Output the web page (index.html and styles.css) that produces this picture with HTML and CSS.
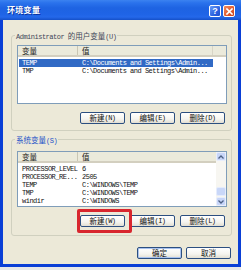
FILE: index.html
```html
<!DOCTYPE html>
<html lang="zh-CN">
<head>
<meta charset="utf-8">
<title>环境变量</title>
<link rel="stylesheet" href="styles.css">
</head>
<body>
<div class="window">
  <div class="titlebar">
    <span class="title">环境变量</span>
    <div class="tb-btns">
      <span class="tb help">?</span>
      <span class="tb close"><svg width="7" height="7" viewBox="0 0 7 7"><path d="M1 1L6 6M6 1L1 6" stroke="#fff" stroke-width="1.6" stroke-linecap="square"/></svg></span>
    </div>
  </div>
  <div class="client">
    <fieldset class="group group-user">
      <legend class="legend legend-dark"><span class="m">Administrator </span>的用户变量<span class="m">(U)</span></legend>
      <div class="list list-user">
        <div class="pane">
          <div class="header"><div class="hc c1">变量</div><div class="hc c2">值</div><div class="hc c3"></div></div>
          <div class="row sel"><span class="n m">TEMP</span><span class="v m">C:\Documents and Settings\Admin...</span></div>
          <div class="row"><span class="n m">TMP</span><span class="v m">C:\Documents and Settings\Admin...</span></div>
        </div>
      </div>
      <div class="btnrow">
        <button class="btn">新建<span class="m">(N)</span></button>
        <button class="btn">编辑<span class="m">(E)</span></button>
        <button class="btn">删除<span class="m">(D)</span></button>
      </div>
    </fieldset>
    <fieldset class="group group-sys">
      <legend class="legend legend-blue">系统变量<span class="m">(S)</span></legend>
      <div class="list list-sys">
        <div class="pane">
          <div class="header"><div class="hc c1">变量</div><div class="hc c2">值</div></div>
          <div class="row"><span class="n m">PROCESSOR_LEVEL</span><span class="v m">6</span></div>
          <div class="row"><span class="n m">PROCESSOR_RE...</span><span class="v m">2505</span></div>
          <div class="row"><span class="n m">TEMP</span><span class="v m">C:\WINDOWS\TEMP</span></div>
          <div class="row"><span class="n m">TMP</span><span class="v m">C:\WINDOWS\TEMP</span></div>
          <div class="row"><span class="n m">windir</span><span class="v m">C:\WINDOWS</span></div>
        </div>
        <div class="scrollbar">
          <div class="sb-btn"><svg width="6" height="4" viewBox="0 0 6 4"><path d="M0.5 3.5L3 1L5.5 3.5" fill="none" stroke="#4d6185" stroke-width="1.3"/></svg></div>
          <div class="sb-track">
            <div class="sb-thumb"></div>
          </div>
          <div class="sb-btn"><svg width="6" height="4" viewBox="0 0 6 4"><path d="M0.5 0.5L3 3L5.5 0.5" fill="none" stroke="#4d6185" stroke-width="1.3"/></svg></div>
        </div>
      </div>
      <div class="btnrow">
        <div class="marked">
          <button class="btn">新建<span class="m">(W)</span></button>
          <span class="redbox"></span>
        </div>
        <button class="btn">编辑<span class="m">(I)</span></button>
        <button class="btn">删除<span class="m">(L)</span></button>
      </div>
    </fieldset>
    <div class="footer">
      <button class="btn btn-default">确定</button>
      <button class="btn">取消</button>
    </div>
  </div>
</div>
</body>
</html>
```

FILE: styles.css
```css
* { box-sizing: border-box; }
html, body { margin: 0; padding: 0; }
body {
  background: #e8e8e8;
  width: 241px;
  height: 270px;
  overflow: hidden;
  font-family: "Noto Sans CJK SC", "Liberation Mono", monospace;
  font-size: 7.5px;
  color: #000;
}
.m {
  font-family: "Liberation Mono", "Noto Sans CJK SC", monospace;
  font-size: 7px;
  letter-spacing: -0.5px;
}
.window {
  width: 241px;
  height: 267px;
  display: flex;
  flex-direction: column;
}
.titlebar {
  height: 20px;
  flex: none;
  display: flex;
  align-items: center;
  justify-content: space-between;
  padding: 0 6px 0 7px;
  background: linear-gradient(to bottom, #3b82f0 0%, #2a72ec 15%, #1e63e2 40%, #1f64e6 70%, #2468ea 85%, #1550c8 100%);
}
.title {
  color: #fff;
  font-family: "Noto Sans CJK SC", sans-serif;
  font-weight: bold;
  font-size: 8px;
  letter-spacing: 0.3px;
  line-height: 10px;
  text-shadow: 1px 1px 0 #0a2f9c;
}
.tb-btns {
  display: flex;
  gap: 2px;
  margin-top: 2px;
}
.tb {
  width: 12px;
  height: 12px;
  border: 1px solid #fff;
  border-radius: 2px;
  display: flex;
  align-items: center;
  justify-content: center;
  color: #fff;
  font-family: "Liberation Sans", sans-serif;
  font-weight: bold;
  font-size: 9px;
  line-height: 1;
}
.help { background: linear-gradient(135deg, #6a9cf8, #2d63e0 60%, #1d4fcf); }
.close { background: linear-gradient(135deg, #f08a60, #e05a2e 60%, #c8441c); }
.client {
  flex: 1;
  background: #ece9d8;
  border: 3px solid #0a3fd6;
  border-top: 0;
  padding: 0 6px 0 8px;
  display: flex;
  flex-direction: column;
}
.group {
  margin: 0;
  width: 221px;
  border: 1px solid #d0d0bf;
  border-radius: 3px;
  padding: 5px 4px 6px 5px;
  min-inline-size: 0;
}
.group-user { margin-top: 11px; }
.group-sys { margin-top: 4px; padding-top: 7px; padding-bottom: 8px; }
.legend {
  padding: 0 1px;
  margin-left: -2px;
  height: 9px;
  line-height: 9px;
  font-size: 7.5px;
}
.legend-dark { color: #3f4658; }
.legend-blue { color: #1d52c8; }
.list {
  width: 210px;
  border: 1px solid #7f9db9;
  background: #fff;
  display: flex;
  overflow: hidden;
}
.list-user { height: 59px; }
.list-sys { height: 56px; }
.pane {
  flex: 1;
  min-width: 0;
}
.header {
  height: 11px;
  display: flex;
  background: #ebeadb;
  border-bottom: 2px solid #d3cfbf;
  margin-bottom: 2px;
}
.hc {
  height: 9px;
  line-height: 9px;
  padding-left: 4px;
  font-size: 7.5px;
  color: #222;
}
.c1 { width: 60px; border-right: 1px solid #c9c6b4; }
.c2 { width: 135px; border-right: 1px solid #d8d5c6; flex: none; }
.list-sys .c2 { flex: 1; border-right: 0; }
.c3 { flex: 1; }
.row {
  width: 194px;
  margin-left: 1px;
  height: 8px;
  line-height: 8px;
  display: flex;
  white-space: nowrap;
  color: #111;
}
.row.sel { background: #316ac5; color: #fff; }
.n { width: 63px; padding-left: 3px; flex: none; overflow: hidden; }
.v { flex: 1; }
.scrollbar {
  width: 10px;
  flex: none;
  display: flex;
  flex-direction: column;
  background: #f7f6f1;
}
.sb-btn {
  height: 9px;
  flex: none;
  background: #c7d5f8;
  border: 1px solid #e8eefc;
  border-radius: 2px;
  display: flex;
  align-items: center;
  justify-content: center;
}
.sb-track {
  flex: 1;
  display: flex;
  flex-direction: column;
  justify-content: flex-end;
  padding-bottom: 1px;
}
.sb-thumb {
  height: 9px;
  background: #c9d7f8;
  border: 1px solid #e5ecfc;
  border-radius: 2px;
}
.btnrow {
  margin-top: 8px;
  display: flex;
  justify-content: flex-end;
  gap: 5px;
  padding-right: 2px;
}
.btn {
  width: 45px;
  height: 12px;
  margin: 0;
  padding: 0;
  border: 1px solid #2c4f80;
  border-radius: 2px;
  background: linear-gradient(to bottom, #ffffff 0%, #f5f4ef 60%, #e2ded2 100%);
  font-family: "Noto Sans CJK SC", "Liberation Mono", monospace;
  font-size: 7.5px;
  line-height: 10px;
  color: #111;
  display: flex;
  align-items: center;
  justify-content: center;
  white-space: nowrap;
}
.btn-default {
  box-shadow: inset 0 0 0 1px #a9c2ee;
}
.marked { position: relative; display: flex; }
.redbox {
  position: absolute;
  left: -3px;
  right: -7px;
  top: -6px;
  bottom: -6px;
  border: 3px solid #d8262e;
  border-radius: 2px;
}
.footer {
  margin-top: 11px;
  display: flex;
  justify-content: flex-end;
  gap: 4px;
  margin-right: 1px;
}
```
